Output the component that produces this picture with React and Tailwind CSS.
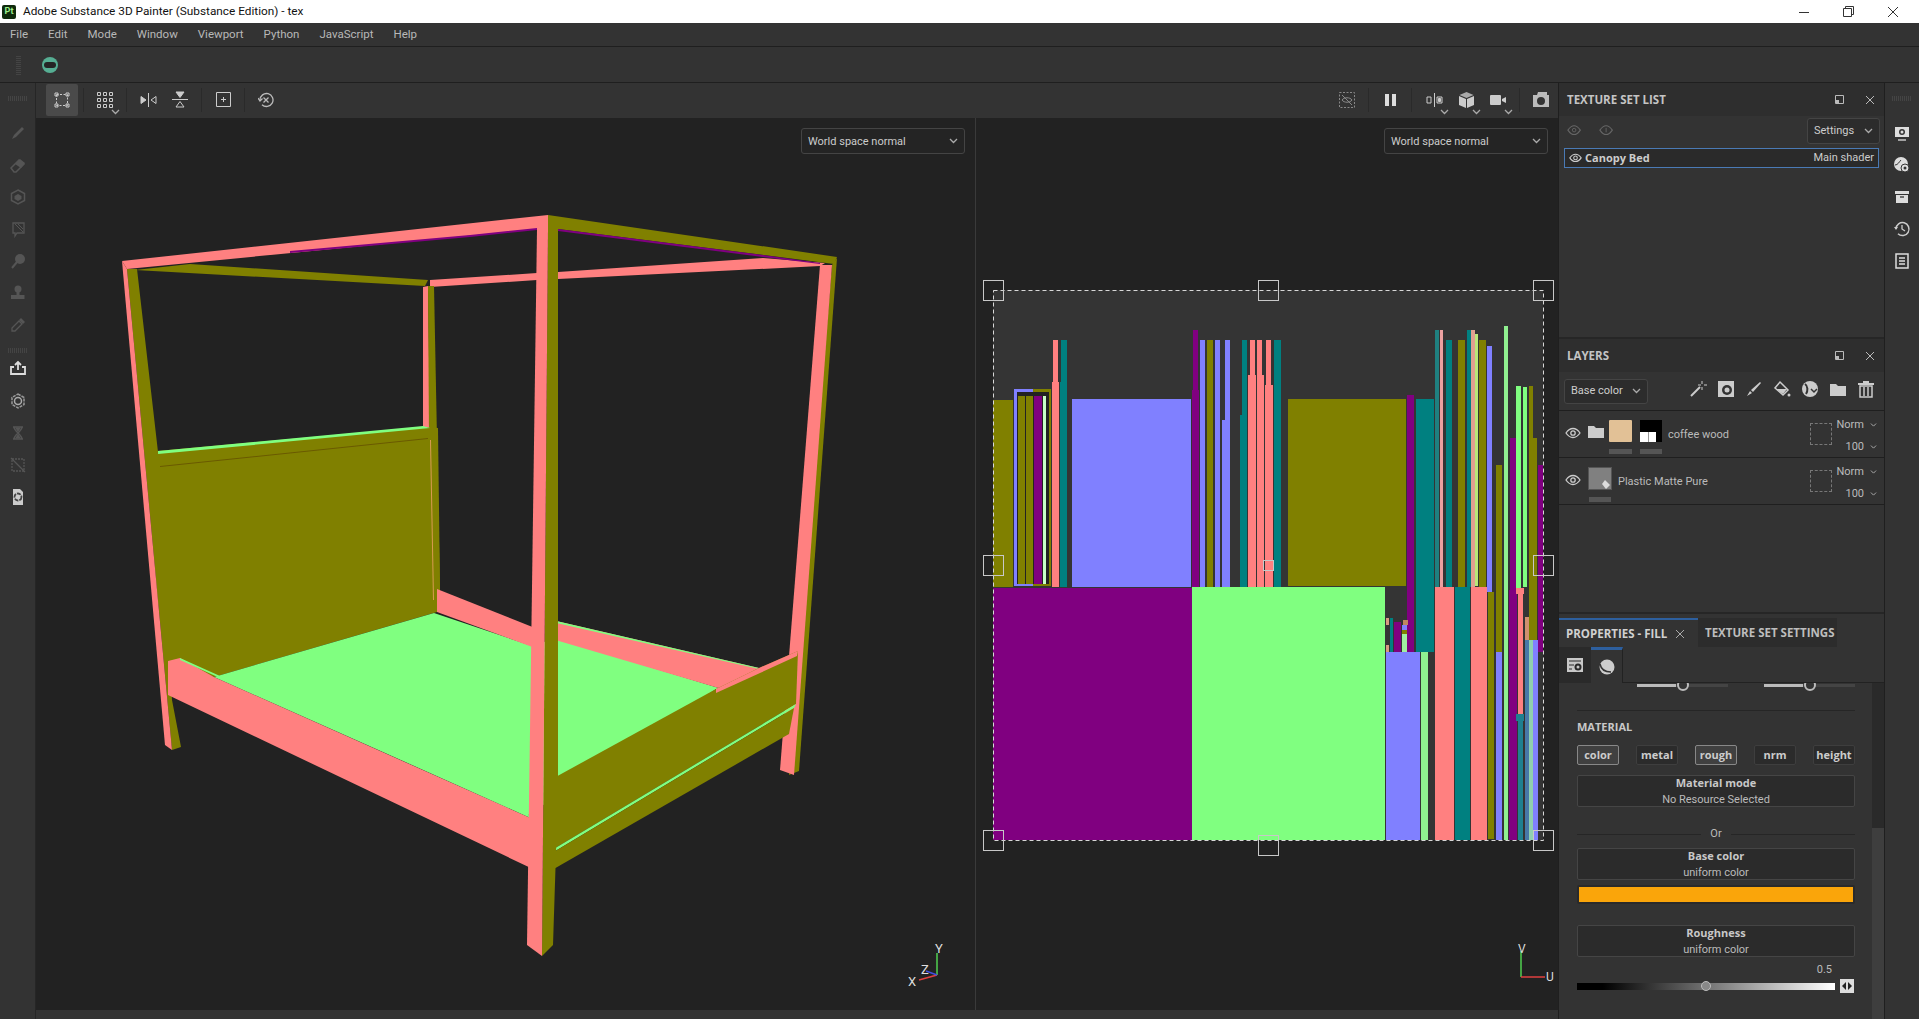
import { useId } from "react";

const OLIVE = "#808000";
const PINK = "#ff8080";
const GREEN = "#80ff80";
const PURPLE = "#800080";
const PERI = "#8080ff";
const TEAL = "#008080";

// [x, y, w, h, colour] in page pixels
const uvRects = [
  [993, 400, 20, 187, OLIVE],
  [1014, 389, 19, 197, PERI],
  [1033, 389, 18, 197, OLIVE],
  [1017, 392, 32, 192, "#222222"],
  [1018, 396, 7, 188, OLIVE],
  [1026, 396, 7, 188, OLIVE],
  [1034, 396, 8, 188, PURPLE],
  [1043, 396, 3, 188, "#c8ffc8"],
  [1053, 340, 5, 100, PINK],
  [1052, 382, 7, 205, PINK],
  [1061, 340, 6, 100, TEAL],
  [1060, 382, 7, 205, TEAL],
  [1072, 399, 119, 188, PERI],
  [1193, 330, 5, 90, PURPLE],
  [1192, 390, 7, 197, PURPLE],
  [1200, 340, 5, 247, PERI],
  [1207, 340, 6, 247, OLIVE],
  [1215, 340, 5, 247, PERI],
  [1225, 340, 5, 247, PERI],
  [1222, 420, 3, 167, PERI],
  [1242, 340, 5, 247, TEAL],
  [1240, 415, 7, 172, TEAL],
  [1250, 340, 5, 247, PINK],
  [1248, 375, 8, 212, PINK],
  [1257, 340, 5, 247, PINK],
  [1257, 375, 7, 212, PINK],
  [1266, 340, 5, 247, PINK],
  [1265, 385, 8, 202, PINK],
  [1274, 340, 7, 247, TEAL],
  [1288, 399, 118, 187, OLIVE],
  [1407, 395, 7, 257, PURPLE],
  [1416, 399, 18, 253, TEAL],
  [1435, 330, 4, 258, "#1f8080"],
  [1440, 330, 3, 258, "#eca0a0"],
  [1446, 340, 6, 247, TEAL],
  [1458, 340, 7, 247, OLIVE],
  [1467, 330, 4, 257, TEAL],
  [1471, 330, 4, 257, "#e0a090"],
  [1475, 334, 3, 252, "#b8e878"],
  [1479, 340, 7, 248, OLIVE],
  [1487, 346, 5, 246, PERI],
  [1496, 465, 6, 187, OLIVE],
  [1504, 326, 4, 514, "#90f090"],
  [1510, 438, 6, 402, PURPLE],
  [1516, 386, 5, 202, GREEN],
  [1523, 387, 4, 200, GREEN],
  [1529, 386, 4, 254, OLIVE],
  [1532, 438, 5, 202, OLIVE],
  [1538, 465, 5, 187, PURPLE],
  [993, 588, 199, 252, PURPLE],
  [1192, 587, 193, 253, GREEN],
  [1386, 652, 34, 188, PERI],
  [1421, 652, 7, 188, "#90f090"],
  [1386, 618, 3, 7, "#d89a80"],
  [1386, 645, 3, 7, "#d89a80"],
  [1390, 618, 3, 34, TEAL],
  [1394, 622, 7, 30, PURPLE],
  [1402, 625, 5, 5, PERI],
  [1402, 630, 5, 4, OLIVE],
  [1402, 634, 5, 18, "#a0f0a0"],
  [1403, 620, 5, 5, "#c08860"],
  [1435, 587, 19, 253, PINK],
  [1455, 587, 15, 253, TEAL],
  [1471, 587, 16, 253, PINK],
  [1488, 592, 6, 247, OLIVE],
  [1496, 652, 6, 188, PERI],
  [1509, 590, 8, 250, PURPLE],
  [1518, 590, 5, 125, PINK],
  [1516, 588, 8, 6, PINK],
  [1516, 714, 8, 7, "#1f8090"],
  [1518, 721, 5, 119, "#1f8090"],
  [1525, 640, 4, 200, "#4878a8"],
  [1525, 617, 4, 23, "#d09070"],
  [1529, 640, 4, 200, "#90d0b0"],
  [1533, 640, 5, 200, PERI],
];

const handles = [
  [993, 290, 20], [1268, 290, 20], [1543, 290, 20],
  [993, 565, 20], [1268, 565, 10], [1543, 565, 20],
  [993, 840, 20], [1268, 845, 20], [1543, 840, 20],
];

function Chevron({ className = "" }) {
  return (
    <svg width="9" height="6" viewBox="0 0 9 6" className={className} fill="none" stroke="#aaa" strokeWidth="1.3">
      <path d="M1 1l3.5 3.5L8 1" />
    </svg>
  );
}

function Ico({ size = 18, children, className = "" }) {
  return (
    <svg width={size} height={size} viewBox="0 0 18 18" className={className} fill="none">
      {children}
    </svg>
  );
}

function Grip({ vertical }) {
  return vertical
    ? <div className="w-[5px] h-[20px] bg-[repeating-linear-gradient(0deg,#444_0,#444_1px,transparent_1px,transparent_2px)]" />
    : <div className="w-[20px] h-[5px] bg-[repeating-linear-gradient(90deg,#444_0,#444_1px,transparent_1px,transparent_2px)]" />;
}

const Sep = () => <div className="w-px h-[24px] bg-[#2a2a2a] mx-[5px]" />;

function Tool({ active, children, more, w = "w-[32px]" }) {
  return (
    <div className={`relative ${w} h-[32px] flex items-center justify-center rounded-[2px] ${active ? "bg-[#4a4a4a]" : ""}`}>
      {children}
      {more && <Chevron className="absolute right-[1px] bottom-[1px]" />}
    </div>
  );
}

const leftTools = [
  <Ico><path d="M3 15l2-4L13 3l2 2-8 8z" fill="#555" /></Ico>,
  <Ico><path d="M2 12l8-8 5 4-8 8H5z" fill="none" stroke="#555" strokeWidth="1.5" /><path d="M6 8l5-5 5 4-4 5z" fill="#555" /></Ico>,
  <Ico><path d="M9 2l6.5 3.5v7L9 16l-6.500-3.500v-7z" stroke="#555" strokeWidth="1.5" /><path d="M9 6l3.500 2v3L9 13l-3.500-2V8z" fill="#555" /></Ico>,
  <Ico><path d="M4 3h11v10H8l-2 3v-3H4z" stroke="#555" strokeWidth="1.300" /><path d="M6 4l8 8M9 4l5 5" stroke="#555" /></Ico>,
  <Ico><circle cx="11" cy="7" r="5" fill="#555" /><path d="M3 16l5-6" stroke="#555" strokeWidth="2" /></Ico>,
  <Ico><circle cx="9" cy="5" r="3.500" fill="#555" /><path d="M7.500 8h3v3h5v4H2v-4h5.500z" fill="#555" /></Ico>,
  <Ico><path d="M3 15v-3l7-7 3 3-7 7z" stroke="#555" strokeWidth="1.300" /><path d="M10 4l2-2 4 4-2 2z" fill="#555" /></Ico>,
];

const lowerTools = [
  <Ico><path d="M9 2v8M6 5l3-3 3 3" stroke="#ddd" strokeWidth="1.800" /><path d="M5 7H2v7h14V7h-3" stroke="#ddd" strokeWidth="1.800" /></Ico>,
  <Ico><path d="M9 2l6 3.500v7L9 16l-6-3.500v-7z" stroke="#999" strokeWidth="1.500" strokeDasharray="3 1" /><circle cx="9" cy="9" r="3.500" stroke="#aaa" strokeWidth="1.500" /></Ico>,
  <Ico><path d="M4 3h10M4 15h10M5 3c0 4 8 8 8 12M13 3c0 4-8 8-8 12" stroke="#555" strokeWidth="1.500" /><path d="M6 3.500h6L9 8zM6 14.500h6L9 10z" fill="#555" /></Ico>,
  <Ico><path d="M3 3h12v12H3z" stroke="#555" strokeWidth="1.300" strokeDasharray="2 1" /><path d="M2 2l14 14" stroke="#555" strokeWidth="1.300" /></Ico>,
  <Ico><path d="M4 1h7l3 3v13H4z" fill="#ccc" /><circle cx="9" cy="9" r="3.500" stroke="#444" strokeWidth="1.800" strokeDasharray="4 1" /></Ico>,
];

const stripTools = [
  <Ico><path d="M2 3h14v10H2z" fill="#ddd" /><circle cx="9" cy="8" r="3" fill="#333" /><circle cx="9" cy="8" r="1.500" fill="#ddd" /><path d="M5 16h8" stroke="#ddd" strokeWidth="1.300" /></Ico>,
  <Ico><circle cx="8" cy="8" r="7" fill="#ddd" /><path d="M2 9c3 0 4-3 6-5" stroke="#333" /><circle cx="12" cy="12" r="4" fill="#ddd" stroke="#333" /><circle cx="12" cy="12" r="1.500" fill="#333" /></Ico>,
  <Ico><path d="M2 3h14v3H2zM3 7h12v8H3z" fill="#ddd" /><path d="M7 9h4" stroke="#333" strokeWidth="1.300" /></Ico>,
  <Ico><path d="M3 9a6.500 6.500 0 1 1 2 4.800" stroke="#ccc" strokeWidth="1.500" /><path d="M9 5v4l3 2" stroke="#ccc" strokeWidth="1.300" /><path d="M1 7l2 3 2-3z" fill="#ccc" /></Ico>,
  <Ico><path d="M3 2h12v14H3z" stroke="#ddd" strokeWidth="1.500" /><path d="M6 6h6M6 9h6M6 12h6" stroke="#ddd" strokeWidth="1.300" /></Ico>,
];

function Dropdown({ label, className }) {
  return (
    <div className={`flex items-center justify-between h-[26px] px-[6px] bg-[#242424] border border-[#444] rounded-[3px] text-[11px] text-[#ccc] ${className}`}>
      <span className="pt-[2px]">{label}</span>
      <Chevron />
    </div>
  );
}

function PanelHeader({ title }) {
  return (
    <div className="flex items-center h-[33px] pl-[8px] pr-[8px] bg-[#2e2e2e] shrink-0">
      <span className="text-[11.5px] font-['Open_Sans'] font-bold text-[#c4c4c4] flex-1">{title}</span>
      <svg width="9" height="9" className="mr-[21px]" fill="none"><path d="M.5.5h8v8h-8z" stroke="#bbb" /><path d="M1 5h3v3H1z" fill="#bbb" /></svg>
      <svg width="10" height="10" className="mr-[1px]" stroke="#bbb"><path d="M1 1l8 8M9 1l-8 8" /></svg>
    </div>
  );
}

function Eye({ w = 16 }) {
  return (
    <svg width={w} height={(w * 3) / 4} viewBox="0 0 16 12" fill="none" stroke="#ccc" strokeWidth="1.300" className="shrink-0">
      <path d="M1 6c2-3 4-4.500 7-4.500S13 3 15 6c-2 3-4 4.500-7 4.500S3 9 1 6z" />
      <circle cx="8" cy="6" r="2.200" />
    </svg>
  );
}

function LayerRow({ children, name, nameClass }) {
  return (
    <div className="relative flex items-center h-[47px] border-b border-[#1f1f1f] pl-[6px] text-[11px] text-[#bbb] shrink-0">
      <div className="mb-[2px]"><Eye /></div>
      <div className="flex items-center mb-[6px]">{children}</div>
      <span className={`mt-[3px] ${nameClass}`}>{name}</span>
      <div className="ml-auto w-[22px] h-[22px] border border-dashed border-[#777] mr-[8px]" />
      <div className="w-[44px] pr-[6px] mt-[3px] flex flex-col gap-[6px] items-end leading-[16px]">
        <div className="flex items-center gap-[5px]">Norm<Chevron className="scale-75" /></div>
        <div className="flex items-center gap-[5px]">100<Chevron className="scale-75" /></div>
      </div>
    </div>
  );
}

function ChannelButton({ label, on }) {
  return (
    <div className={`w-[42px] h-[20px] rounded-[2px] border text-[11px] font-['Open_Sans'] font-bold flex items-center justify-center text-[#ccc] ${on ? "bg-[#404040] border-[#888]" : "bg-[#2b2b2b] border-[#3e3e3e]"}`}>
      {label}
    </div>
  );
}

function InfoBox({ title, sub }) {
  return (
    <div className="h-[32px] bg-[#2b2b2b] border border-[#454545] rounded-[2px] flex flex-col items-center text-[11px] leading-[15px] text-[#bbb]">
      <span className="font-['Open_Sans'] font-bold text-[#c8c8c8] -mt-px">{title}</span>
      <span className="mt-[2px]">{sub}</span>
    </div>
  );
}

function MiniSlider({ knob }) {
  return (
    <div className="relative h-[3px] w-[91px] bg-[#444]">
      <div className="h-full bg-[#bbb]" style={{ width: knob - 7 }} />
      <div className="absolute top-[-5px] w-[12px] h-[12px] rounded-full border-2 border-[#bbb] bg-[#333]" style={{ left: knob - 6 }} />
    </div>
  );
}

function BedView() {
  const poly = (points, fill) => <polygon points={points} fill={fill} />;
  return (
    <svg viewBox="36 118 939 892" className="absolute inset-0 w-[939px] h-[892px]">
      {poly("558,272 763,258 825,263 820,266 558,279", PINK)}
      {poly("430,280 537,273 537,280 430,287", PINK)}
      {poly("135,270 190,264 428,280 425,286", OLIVE)}
      {poly("423,287 428,286 430,429 423,428", PINK)}
      {poly("428,286 434,286 440,590 430,590", OLIVE)}
      {poly("146,452 423,427 438,428 440,590 437,612 214,677 168,661 158,600", OLIVE)}
      {poly("158,451 423,426 430,428 158,454", GREEN)}
      {poly("160,466 428,438 428,439 160,467", "#6a5a00")}
      {poly("430,440 431,440 434,600 433,600", "#d89a50")}
      {poly("127,269 137,269 158,452 172,700 181,747 172,750", OLIVE)}
      {poly("122,261 127,269 172,750 165,745", PINK)}
      {poly("832,265 837,258 799,771 789,775", OLIVE)}
      {poly("820,265 832,265 794,775 780,770", PINK)}
      {poly("214,677 434,613 529,645 558,639 722,689 716,689 527,816", GREEN)}
      {poly("437,589 535,628 535,648 437,612", PINK)}
      {poly("552,620 759,668 722,689 552,639", PINK)}
      {poly("552,620 759,668 759,669 552,622", GREEN)}
      {poly("168,661 180,658 214,677 535,820 535,870 168,695", PINK)}
      {poly("180,658 535,818 535,820 180,660", GREEN)}
      {poly("552,779 716,689 759,668 798,651 796,704 552,850", OLIVE)}
      {poly("716,689 759,668 798,651 797,656 760,673 716,693", PINK)}
      {poly("552,850 796,704 794,708 552,853", GREEN)}
      {poly("552,853 794,708 789,734 552,870", OLIVE)}
      {poly("548,229 558,229 558,790 553,945 542,956", OLIVE)}
      {poly("537,229 548,229 542,956 527,945", PINK)}
      {poly("122,261 548,215 548,229 537,229 127,269", PINK)}
      {poly("290,251 470,235 537,228 537,230 470,237 290,253", PURPLE)}
      {poly("548,215 837,257 834,264 558,229 548,229", OLIVE)}
      {poly("558,229 763,255 820,263 820,264 763,257 558,231", PURPLE)}
      <g fontFamily="Roboto, sans-serif" fontSize="13" fill="#ddd">
        <path d="M937 975l-18 5" stroke="#e04040" strokeWidth="1.500" />
        <path d="M937 975v-22" stroke="#50d050" strokeWidth="1.500" />
        <path d="M937 975l-11-4" stroke="#4050e0" strokeWidth="1.500" />
        <text x="935" y="953">Y</text>
        <text x="921" y="974">Z</text>
        <text x="908" y="986">X</text>
      </g>
    </svg>
  );
}

function UvView() {
  const clip = useId();
  return (
    <svg viewBox="976 118 582 892" className="absolute inset-0 w-full h-full">
      <clipPath id={clip}><rect x="993" y="290" width="550" height="550" /></clipPath>
      <rect x="993" y="290" width="550" height="550" fill="#343434" />
      <g clipPath={`url(#${clip})`}>
        {uvRects.map(([x, y, w, h, c], i) => <rect key={i} x={x} y={y} width={w} height={h} fill={c} />)}
      </g>
      <rect x="993.5" y="290.5" width="550" height="550" fill="none" stroke="#d8d8d8" strokeDasharray="4 3" />
      {handles.map(([x, y, s], i) => (
        <rect key={i} x={x - s / 2 + 0.5} y={y - s / 2 + 0.5} width={s} height={s} fill="none" stroke="#c8c8c8" />
      ))}
      <path d="M1521 977v-26" stroke="#50d050" strokeWidth="1.500" />
      <path d="M1521 977h24" stroke="#e04040" strokeWidth="1.500" />
      <text x="1518" y="953" fontFamily="Roboto, sans-serif" fontSize="12" fill="#ddd">V</text>
      <text x="1546" y="981" fontFamily="Roboto, sans-serif" fontSize="12" fill="#ddd">U</text>
    </svg>
  );
}

export default function App() {
  const menus = ["File", "Edit", "Mode", "Window", "Viewport", "Python", "JavaScript", "Help"];

  return (
    <div className="w-[1919px] h-[1019px] overflow-hidden flex flex-col bg-[#333] font-['Roboto',sans-serif]">
      <div className="h-[23px] bg-white flex items-center pl-[2px] shrink-0">
        <div className="w-[14px] h-[14px] bg-[#0f2a0c] rounded-[2px] text-[9px] font-bold text-[#9cf08c] flex items-center justify-center">Pt</div>
        <span className="ml-[7px] text-[11.8px] text-[#111]">Adobe Substance 3D Painter (Substance Edition) - tex</span>
        <div className="ml-auto flex items-center gap-[34px] pr-[21px]">
          <svg width="10" height="10" stroke="#333"><path d="M0 5.500h10" /></svg>
          <svg width="11" height="11" fill="none" stroke="#333"><path d="M.5 2.500h8v8h-8zM2.500 2.500v-2h8v8h-2" /></svg>
          <svg width="10" height="10" stroke="#333"><path d="M0 0l10 10M10 0L0 10" /></svg>
        </div>
      </div>

      <div className="h-[24px] flex items-center border-b border-[#1f1f1f] shrink-0 text-[11.5px] text-[#b8b8b8] gap-[20px] pl-[10px]">
        {menus.map((m) => <span key={m}>{m}</span>)}
      </div>

      <div className="h-[36px] flex items-center border-b border-[#1f1f1f] shrink-0 pl-[16px]">
        <Grip vertical />
        <div className="ml-[21px] w-[16px] h-[16px] rounded-full bg-[#56ae93] flex items-center justify-center">
          <div className="w-[12px] h-[6px] rounded-full bg-[#252525]" />
        </div>
      </div>

      <div className="flex flex-1 min-h-0">
        <div className="w-[36px] border-r border-[#262626] shrink-0 flex flex-col items-center pt-[13px]">
          <Grip />
          <div className="mt-[16px] flex flex-col items-center">
            {leftTools.map((t, i) => <div key={i} className="h-[32px] flex items-center justify-center">{t}</div>)}
            <div className="h-[12px] flex items-end"><Grip /></div>
            {lowerTools.map((t, i) => <div key={i} className="h-[32px] flex items-center justify-center">{t}</div>)}
          </div>
        </div>

        <div className="w-[1522px] shrink-0 flex flex-col">
          <div className="h-[35px] flex items-center pl-[10px] pr-px pb-[2px] shrink-0">
            <Tool active>
              <svg width="16" height="16" fill="none" stroke="#ccc"><path d="M2.500 2.500h11v11h-11z" strokeDasharray="2 1.500" /><path d="M1 1h3v3H1zM12 1h3v3h-3zM1 12h3v3H1zM12 12h3v3h-3z" /></svg>
            </Tool>
            <Sep />
            <Tool more>
              <svg width="16" height="16" fill="none" stroke="#ccc"><path d="M.5.500h3v3h-3zM6.500.500h3v3h-3zM12.500.500h3v3h-3zM.5 6.500h3v3h-3zM6.500 6.500h3v3h-3zM12.500 6.500h3v3h-3zM.5 12.500h3v3h-3zM6.500 12.500h3v3h-3zM12.500 12.500h3v3h-3z" /></svg>
            </Tool>
            <Sep />
            <Tool>
              <svg width="17" height="14" fill="none" stroke="#ccc"><path d="M8.500 0v14" /><path d="M1 3.500l5 3.500-5 3.500z" fill="#ccc" /><path d="M16 3.500L11 7l5 3.500z" /></svg>
            </Tool>
            <Tool>
              <svg width="16" height="17" fill="none" stroke="#ccc"><path d="M0 8.500h16" /><path d="M4 1h8L8 6.500z" fill="#ccc" /><path d="M4 16h8l-4-5.500z" /></svg>
            </Tool>
            <Sep />
            <Tool>
              <svg width="15" height="15" fill="none" stroke="#ccc"><path d="M.5.500h14v14H.5z" /><path d="M7.500 5v5M5 7.500h5" /></svg>
            </Tool>
            <Sep />
            <Tool>
              <svg width="16" height="16" fill="none" stroke="#bbb" strokeWidth="1.300"><path d="M2 8a6.500 6.500 0 1 1 2 4.700" /><path d="M5.500 5.500l5 5M10.500 5.500l-5 5" /><path d="M0 6l2 3 2.500-2.500" /></svg>
            </Tool>
            <div className="ml-auto flex items-center">
              <Tool>
                <svg width="16" height="16" fill="none" stroke="#888"><path d="M.5.500h15v15H.5z" strokeDasharray="2 1.500" /><path d="M3 8c2-3 8-3 10 0-2 3-8 3-10 0zM3 3l10 10" /></svg>
              </Tool>
              <Sep />
              <Tool>
                <svg width="11" height="12" fill="#ddd"><path d="M0 0h4v12H0zM7 0h4v12H7z" /></svg>
              </Tool>
              <Sep />
              <div className="w-[2px]" />
              <Tool more w="w-[31px]">
                <svg width="17" height="14" fill="none" stroke="#ccc"><path d="M8.500 0v14" /><path d="M1 4h4v6H1z" /><path d="M11 4h5v6h-5z" /><path d="M12.500 5.500h2v3h-2z" fill="#ccc" /></svg>
              </Tool>
              <Tool more>
                <svg width="15" height="16" fill="#ccc"><path d="M7.500 0l7 3-7 3-7-3z" fill="#aaa" /><path d="M0 4l7 3v9l-7-3zM8 7l7-3v9l-7 3z" /></svg>
              </Tool>
              <Tool more>
                <svg width="16" height="12" fill="#ccc"><path d="M1 1h9a1 1 0 0 1 1 1v8a1 1 0 0 1-1 1H1a1 1 0 0 1-1-1V2a1 1 0 0 1 1-1zM12 5l4-2v6l-4-2z" /></svg>
              </Tool>
              <Sep />
              <Tool>
                <svg width="16" height="15" fill="#bbb"><path fillRule="evenodd" d="M0 3h4l1-3h9v3h2v12H0zM8 5a4 4 0 1 0 0 8 4 4 0 0 0 0-8z" /></svg>
              </Tool>
            </div>
          </div>

          <div className="flex-1 min-h-0 flex bg-[#222]">
            <div className="relative w-[940px] shrink-0 border-r border-[#3a3a3a]">
              <BedView />
              <Dropdown label="World space normal" className="absolute top-[10px] right-[10px] w-[164px]" />
            </div>
            <div className="relative flex-1">
              <UvView />
              <Dropdown label="World space normal" className="absolute top-[10px] right-[10px] w-[164px]" />
            </div>
          </div>
          <div className="h-[9px] shrink-0" />
        </div>

        <div className="w-[327px] shrink-0 flex flex-col border-l border-[#1f1f1f] border-r">
          <div className="h-[256px] flex flex-col border-b-2 border-[#262626] shrink-0">
            <PanelHeader title="TEXTURE SET LIST" />
            <div className="flex items-center h-[30px] pl-[8px] pr-[4px]">
              <Ico size={16}><path d="M1 8c2-3 4-5 7-5s5 2 7 5c-2 3-4 5-7 5s-5-2-7-5z" stroke="#666" strokeWidth="1.200" /><circle cx="8" cy="8" r="2" stroke="#666" /></Ico>
              <Ico size={16} className="ml-[16px]"><path d="M1 8c2-3 4-5 7-5s5 2 7 5c-2 3-4 5-7 5s-5-2-7-5z" stroke="#666" strokeWidth="1.200" /><path d="M8 5.500v5" stroke="#666" /></Ico>
              <div className="ml-auto w-[73px] h-[26px] bg-[#2c2c2c] border border-[#444] rounded-[3px] flex items-center justify-between px-[6px] text-[11px] text-[#ccc]">
                Settings
                <Chevron />
              </div>
            </div>
            <div className="mx-[5px] mt-[2px] h-[20px] bg-[#2a2a2a] border border-[#4a7ab5] flex items-center px-[4px] text-[11px] text-[#ccc]">
              <Eye w={13} />
              <span className="font-['Open_Sans'] font-bold ml-[3px]">Canopy Bed</span>
              <span className="ml-auto">Main shader</span>
            </div>
          </div>

          <div className="h-[275px] flex flex-col shrink-0 border-b-2 border-[#262626]">
            <PanelHeader title="LAYERS" />
            <div className="flex items-center h-[39px] pl-[5px] pr-[9px] border-b border-[#1f1f1f] shrink-0">
              <div className="w-[84px] h-[25px] border border-[#444] rounded-[3px] bg-[#2c2c2c] flex items-center justify-between px-[6px] text-[11px] text-[#ccc]">
                Base color
                <Chevron />
              </div>
              <div className="ml-auto mb-[4px] flex items-center gap-[10px]">
                <Ico><path d="M2 16l9-9" stroke="#ccc" strokeWidth="2" /><path d="M13 1v3M13 7v3M9 5h3M15 5h3" stroke="#ccc" /></Ico>
                <Ico><path d="M1 1h16v16H1z" fill="#ccc" /><circle cx="10" cy="10" r="5" fill="#333" /><circle cx="10" cy="10" r="2.500" fill="#ccc" /></Ico>
                <Ico><path d="M2 16l3-5 2 2zM6 10l9-8 1 1-8 9z" fill="#ccc" /></Ico>
                <Ico><path d="M7 2l8 8-5 5-8-7z" stroke="#ccc" strokeWidth="1.500" /><path d="M3 9h11l-4 5z" fill="#ccc" /><circle cx="16" cy="15" r="1.500" fill="#ccc" /></Ico>
                <Ico><circle cx="9" cy="9" r="8" fill="#ccc" /><path d="M4 4c3 2 3 7 1 10" stroke="#333" strokeWidth="2" /><path d="M10 9l3 3 3-3" stroke="#333" strokeWidth="1.500" /></Ico>
                <Ico><path d="M1 4h6l2 2h8v10H1z" fill="#ccc" /></Ico>
                <Ico><path d="M1 3h16v2H1zM6 1h6v2H6z" fill="#ccc" /><path d="M3 6h12v11H3z" stroke="#ccc" strokeWidth="1.500" /><path d="M7 7v9M11 7v9" stroke="#ccc" strokeWidth="1.500" /></Ico>
              </div>
            </div>
            <LayerRow name="coffee wood" nameClass="ml-[6px]">
              <svg width="16" height="13" className="ml-[7px]" fill="#ccc"><path d="M0 1h6l2 2h8v10H0z" /></svg>
              <div className="relative ml-[5px] w-[23px] h-[22px] rounded-[1px] bg-[#e2c196]">
                <div className="absolute left-0 top-[29px] w-[23px] h-[5px] bg-[#555]" />
              </div>
              <div className="relative ml-[8px] w-[22px] h-[22px] bg-black">
                <div className="absolute left-0 bottom-0 w-[16px] h-[10px] bg-white flex justify-evenly">
                  <div className="w-px h-full bg-[#999]" />
                </div>
                <div className="absolute left-0 top-[29px] w-[22px] h-[5px] bg-[#555]" />
              </div>
            </LayerRow>
            <LayerRow name="Plastic Matte Pure" nameClass="ml-[6px]">
              <div className="relative ml-[7px] w-[24px] h-[23px] bg-[#808080] border border-[#555]">
                <svg width="9" height="9" className="absolute right-0 bottom-0" fill="#ddd"><path d="M3 0l5 5-4 4-4-5z" /></svg>
                <div className="absolute left-0 top-[29px] w-[22px] h-[5px] bg-[#555]" />
              </div>
            </LayerRow>
          </div>

          <div className="flex-1 min-h-0 flex flex-col">
            <div className="flex h-[29px] shrink-0 mt-[4px]">
              <div className="w-[139px] border-t-2 border-[#2d5f9e] pl-[7px] flex items-center text-[11.5px] font-['Open_Sans'] font-bold text-[#d0d0d0]">
                PROPERTIES - FILL
                <svg width="10" height="10" className="ml-[8px]" stroke="#aaa"><path d="M1 1l8 8M9 1L1 9" /></svg>
              </div>
              <div className="w-[139px] bg-[#2c2c2c] pl-[7px] flex items-center text-[11.5px] font-['Open_Sans'] font-bold text-[#bdbdbd] whitespace-nowrap">
                TEXTURE SET SETTINGS
              </div>
            </div>
            <div className="flex h-[36px] shrink-0">
              <div className="w-[32px] bg-[#2a2a2a] flex items-center justify-center">
                <Ico><path d="M1 2h16v14H1z" fill="#c8c8c8" /><circle cx="12" cy="11" r="3.500" fill="#2a2a2a" /><circle cx="12" cy="11" r="1.500" fill="#c8c8c8" /><path d="M3 5h12M3 9h5M3 13h3" stroke="#2a2a2a" /></Ico>
              </div>
              <div className="w-[32px] border-t-[3px] border-[#2d5f9e] flex items-center justify-center border-r border-r-[#222]">
                <Ico><circle cx="9" cy="9" r="7.500" fill="#ccc" /><path d="M2 6c1 5 5 8 11 8" stroke="#333" strokeWidth="1.500" /></Ico>
              </div>
              <div className="flex-1 border-b border-[#222]" />
            </div>

            <div className="flex flex-1 min-h-0">
              <div className="flex-1 pl-[18px] pr-[17px] relative overflow-hidden">
                <div className="flex pl-[60px] gap-[36px] h-[3px] mt-[1px]">
                  <MiniSlider knob={46} />
                  <MiniSlider knob={46} />
                </div>
                <div className="mt-[23px] border-t border-[#262626]" />
                <div className="mt-[8px] text-[11px] font-['Open_Sans'] font-bold text-[#c8c8c8] leading-[16px]">MATERIAL</div>
                <div className="mt-[10px] flex justify-between">
                  <ChannelButton label="color" on />
                  <ChannelButton label="metal" />
                  <ChannelButton label="rough" on />
                  <ChannelButton label="nrm" />
                  <ChannelButton label="height" />
                </div>
                <div className="mt-[10px]"><InfoBox title="Material mode" sub="No Resource Selected" /></div>
                <div className="mt-[19px] flex items-center gap-[9px] text-[11px] leading-[16px] text-[#bbb]">
                  <div className="flex-1 border-t border-[#262626]" />
                  Or
                  <div className="flex-1 border-t border-[#262626]" />
                </div>
                <div className="mt-[6px]"><InfoBox title="Base color" sub="uniform color" /></div>
                <div className="mt-[5px] h-[19px] border-2 border-[#2a2a2a] rounded-[2px] bg-[#faa50a]" />
                <div className="mt-[21px]"><InfoBox title="Roughness" sub="uniform color" /></div>
                <div className="mt-[5px] text-right pr-[23px] text-[11px] leading-[16px] text-[#bbb]">0.5</div>
                <div className="relative flex items-center mt-[1px]">
                  <div className="w-[258px] h-[7px] bg-[linear-gradient(90deg,#000_10%,#fff_100%)]" />
                  <div className="absolute left-[124px] w-[10px] h-[10px] rounded-full bg-[#888] border border-[#bbb]" />
                  <svg width="14" height="14" className="ml-[5px]"><rect width="14" height="14" fill="#ddd" /><path d="M6 3L2 7l4 4zM8 3l4 4-4 4z" fill="#222" /></svg>
                </div>
              </div>
              <div className="w-[12px] shrink-0 bg-[#2a2a2a] pt-[145px]">
                <div className="h-full bg-[#3e3e3e]" />
              </div>
            </div>
          </div>
        </div>

        <div className="w-[34px] shrink-0 flex flex-col items-center pt-[13px]">
          <Grip />
          <div className="mt-[16px] flex flex-col items-center">
            {stripTools.map((t, i) => <div key={i} className="h-[32px] flex items-center justify-center">{t}</div>)}
          </div>
        </div>
      </div>
    </div>
  );
}
